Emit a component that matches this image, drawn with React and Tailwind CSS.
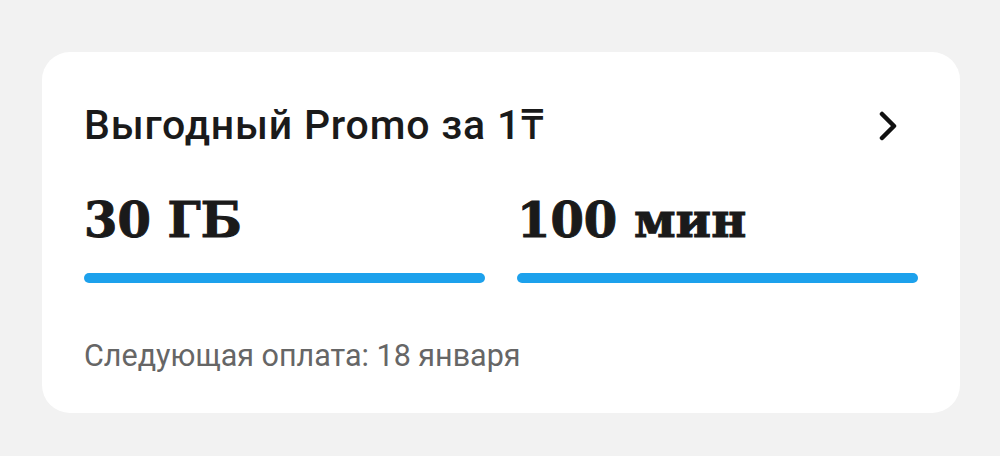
import React from 'react'

const Stat = ({ value }) => (
    <div className="flex flex-col">
        <div className="text-[48px] leading-none font-bold text-[#1a1a1a] [-webkit-text-stroke:1px_#1a1a1a]" style={{ fontFamily: '"DejaVu Serif", serif' }}>
            {value}
        </div>
        <div className="mt-[29px] h-[10px] rounded-full bg-[#1da1ec]" />
    </div>
)

const App = () => {
    return (
        <main className="min-h-screen w-full bg-[#f2f2f2] pt-[52px]" style={{ fontFamily: 'Roboto, "Noto Sans", sans-serif' }}>
            <section className="ml-[42px] w-[918px] h-[361px] bg-white rounded-[28px] px-[42px] pt-[53px]">
                <div className="flex items-center justify-between">
                    <h2 className="text-[41px] leading-none font-medium tracking-[0.8px] text-[#1a1a1a]">Выгодный Promo за 1₸</h2>
                    <svg width="24" height="30" viewBox="0 0 24 30" className="mr-[16px]">
                        <path d="M4 3 L16 15 L4 27" fill="none" stroke="#111" strokeWidth="4.5" strokeLinecap="round" strokeLinejoin="round" />
                    </svg>
                </div>

                <div className="grid grid-cols-2 gap-8 mt-[50px]">
                    <Stat value="30 ГБ" />
                    <Stat value="100 мин" />
                </div>

                <p className="mt-[58px] text-[30.5px] leading-none text-[#666]">Следующая оплата: 18 января</p>
            </section>
        </main>
    )
}

export default App
